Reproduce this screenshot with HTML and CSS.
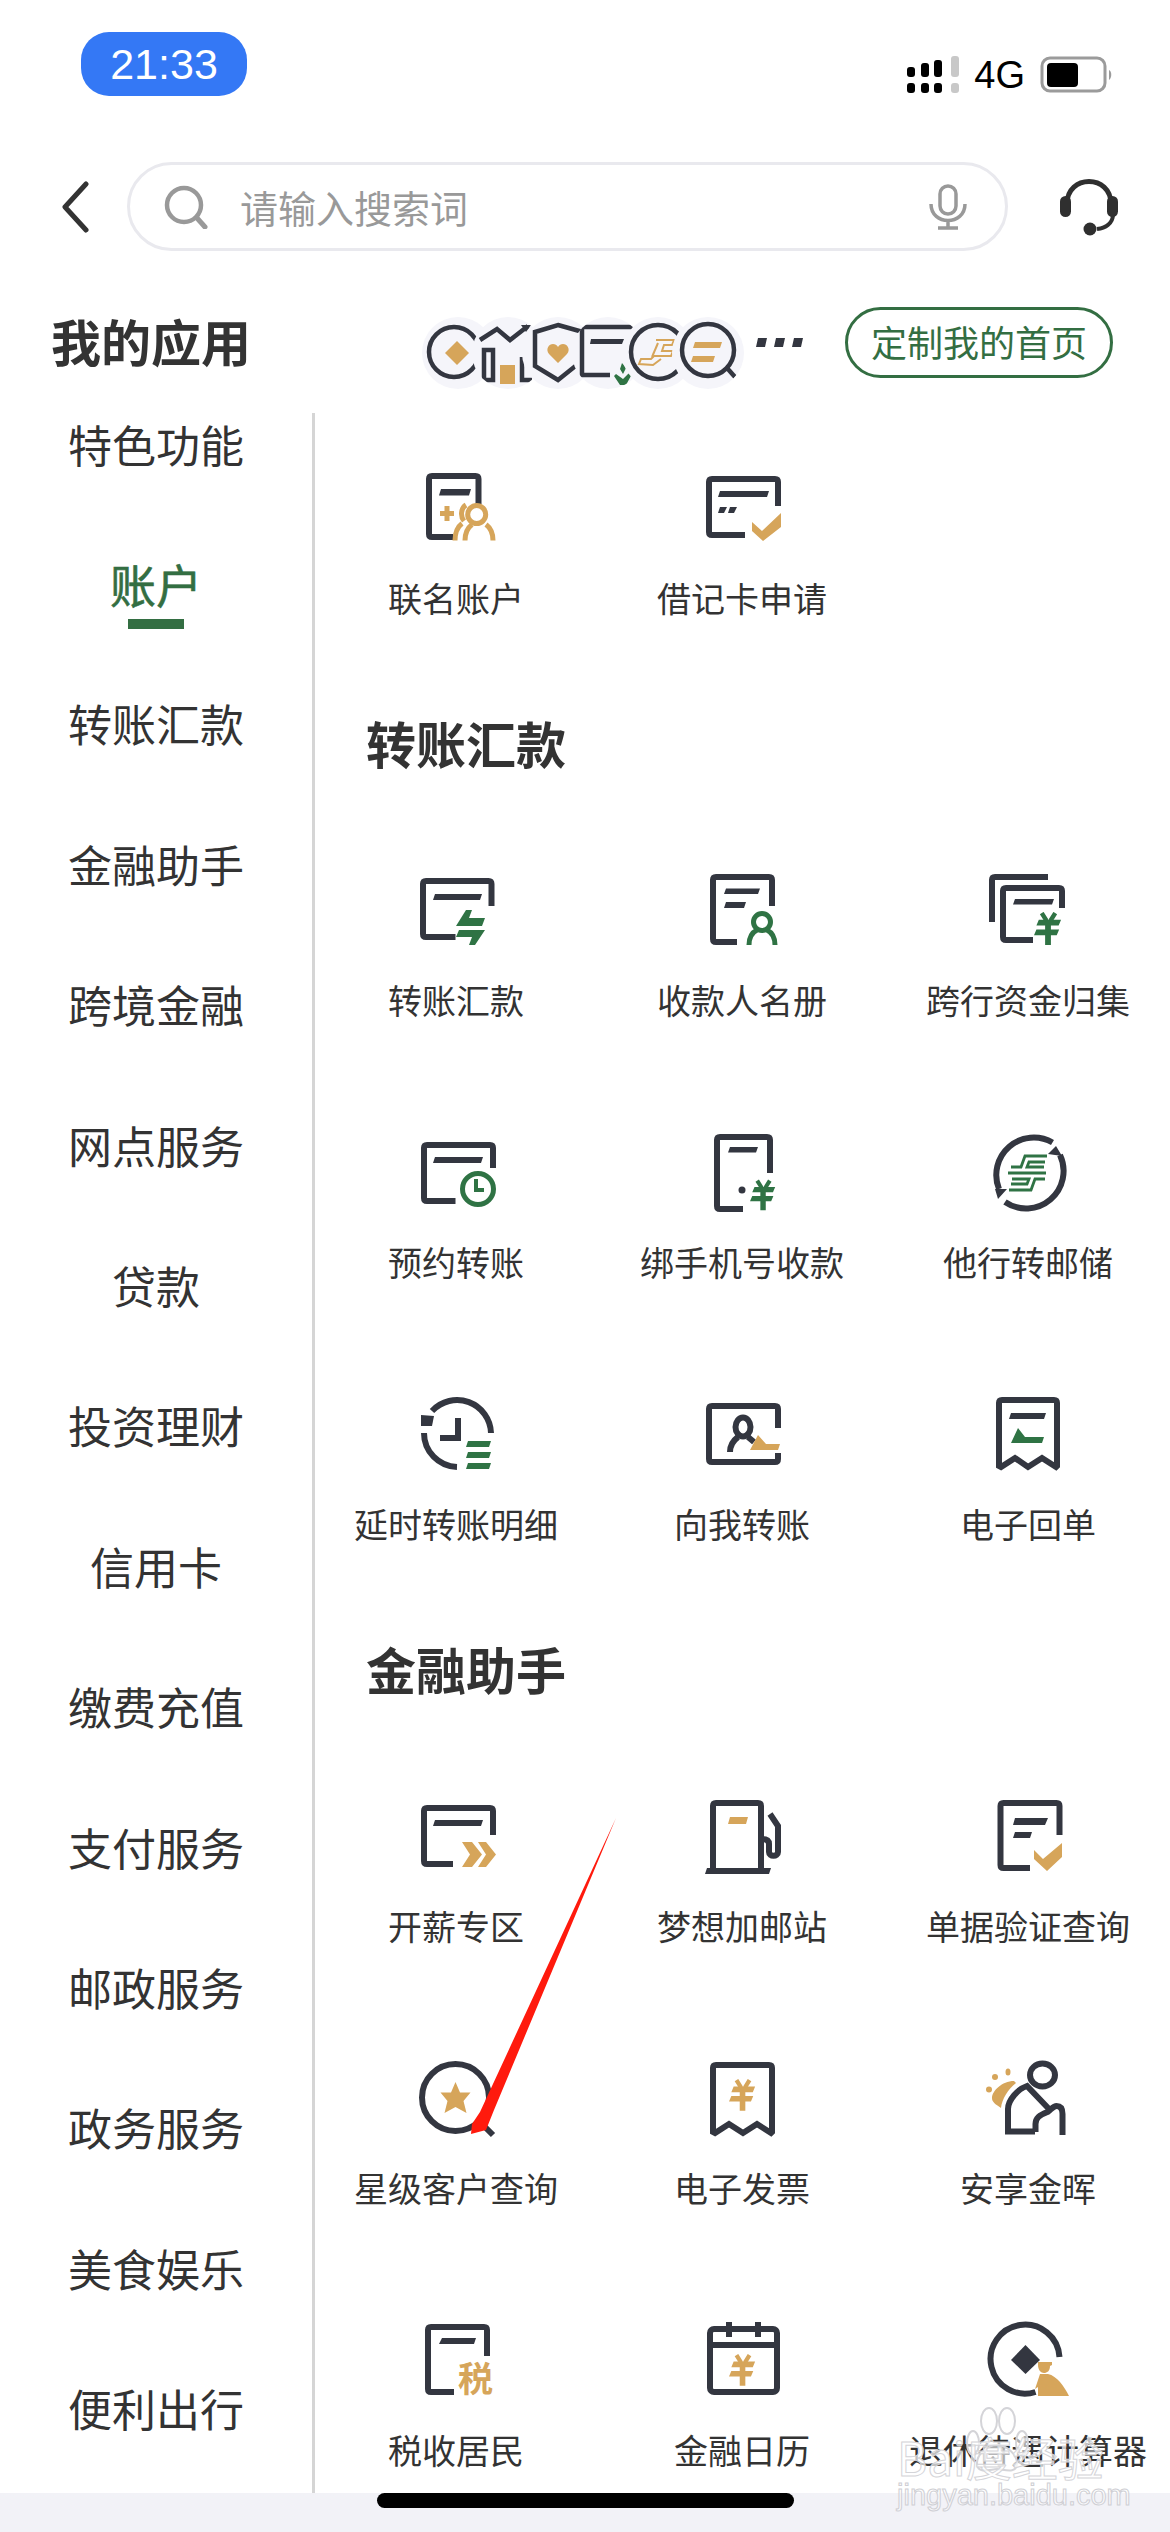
FILE: index.html
```html
<!DOCTYPE html>
<html lang="zh-CN">
<head>
<meta charset="UTF-8">
<meta name="viewport" content="width=device-width, initial-scale=1.0">
<title>我的应用</title>
<link rel="stylesheet" href="styles.css">
</head>
<body>
<svg class="defs" width="0" height="0">
    <symbol id="yen" viewBox="0 0 30 34">
        <path d="M5 8h23l-2.5 6H2.5zM2.5 18H26l-2.5 6H0zM11.5 8h6v26h-6z" fill="currentColor"/>
        <path d="M8 1l5 8M22 1l-5 8" fill="none" stroke="currentColor" stroke-width="4.5"/>
    </symbol>
</svg>

<div class="page">
    <div class="status">
        <div class="clock">21:33</div>
        <div class="status-right">
            <svg width="54" height="38" viewBox="0 0 54 38">
                <rect x="0" y="11" width="8" height="10" rx="3"/>
                <rect x="14" y="7" width="8" height="14" rx="3"/>
                <rect x="27" y="4" width="8" height="17" rx="3"/>
                <rect x="44" y="0" width="8" height="21" rx="3" fill="#c8c8c8"/>
                <rect x="0" y="27" width="8" height="10" rx="3"/>
                <rect x="14" y="27" width="8" height="10" rx="3"/>
                <rect x="27" y="27" width="8" height="10" rx="3"/>
                <rect x="44" y="27" width="8" height="10" rx="3" fill="#c8c8c8"/>
            </svg>
            <span class="net">4G</span>
            <svg width="74" height="38" viewBox="0 0 74 38">
                <rect x="2" y="2" width="63" height="33" rx="8" fill="none" stroke="#9b9b9b" stroke-width="3"/>
                <rect x="7" y="7" width="31" height="24" rx="4" fill="#000"/>
                <path d="M69 14c3 1 3 8 0 10z" fill="#9b9b9b"/>
            </svg>
        </div>
    </div>

    <div class="search-row">
        <svg width="30" height="52" viewBox="0 0 30 52">
            <path d="M26 3L5 26l21 23" fill="none" stroke="#333" stroke-width="5" stroke-linecap="round" stroke-linejoin="round"/>
        </svg>
        <div class="search-box">
            <svg width="44" height="44" viewBox="0 0 44 44">
                <circle cx="20" cy="20" r="17" fill="none" stroke="#999" stroke-width="4.5"/>
                <path d="M33 33l8 9" stroke="#999" stroke-width="5" stroke-linecap="round"/>
            </svg>
            <span class="placeholder">请输入搜索词</span>
            <svg width="38" height="46" viewBox="0 0 38 46">
                <rect x="11" y="2" width="16" height="28" rx="8" fill="none" stroke="#999" stroke-width="3.5"/>
                <path d="M2 20c0 22 34 22 34 0M19 36v8M9 44h20" fill="none" stroke="#999" stroke-width="3.5"/>
            </svg>
        </div>
        <svg class="headset" width="60" height="58" viewBox="0 0 60 58">
            <path d="M8 26C8 -4 52 -4 52 26" fill="none" stroke="#2f2f2f" stroke-width="5"/>
            <rect x="1" y="18" width="11" height="21" rx="5.5" fill="#2f2f2f"/>
            <rect x="48" y="18" width="11" height="21" rx="5.5" fill="#2f2f2f"/>
            <path d="M54 36c0 10-8 14-16 15" fill="none" stroke="#2f2f2f" stroke-width="4"/>
            <circle cx="31" cy="51" r="6.5" fill="#2f2f2f"/>
        </svg>
    </div>

    <div class="head-row">
        <h1 class="head-title">我的应用</h1>
        <div class="stack">
            <div class="stack-item">
                <svg width="72" height="72" viewBox="0 0 72 72">
                    <circle class="s-thin" cx="32" cy="35" r="25"/>
                    <path class="gold" d="M35 24l12 12-12 12-12-12z"/>
                </svg>
            </div>
            <div class="stack-item">
                <svg width="72" height="72" viewBox="0 0 72 72">
                    <path class="s-thin" d="M8 23l17-11 13 11 18-14"/>
                    <path class="ink-f" d="M49 8h10l-5 7z"/>
                    <rect class="s-thin" x="12" y="33" width="9" height="30"/>
                    <rect class="gold" x="28" y="48" width="15" height="19"/>
                    <path class="s-thin" d="M50 40v23h10"/>
                </svg>
            </div>
            <div class="stack-item">
                <svg width="72" height="72" viewBox="0 0 72 72">
                    <path class="s-thin" d="M36 8l25 7v28L36 63 13 49V15z"/>
                    <path class="gold" d="M36 46l-9-9c-4-5 0-10 4-10 2 0 4 1 5 3 1-2 3-3 5-3 4 0 8 5 4 10z"/>
                </svg>
            </div>
            <div class="stack-item">
                <svg width="72" height="72" viewBox="0 0 72 72">
                    <path class="s-thin" d="M62 10H10v48h28"/>
                    <path class="ink-f" d="M19 22h33l-2 5H18z"/>
                    <path class="green" d="M50 46l4 5-3 6-3-5zM44 57l7 5 7-7 2 2-6 11h-6l-6-9z"/>
                </svg>
            </div>
            <div class="stack-item">
                <svg width="72" height="72" viewBox="0 0 72 72">
                    <circle class="s-thin" cx="36" cy="35" r="27"/>
                    <path class="s-logo" d="M34 23h18l-2 5H42l-2 6h11l-2 5H32l-3 3H19l-2 5 14 1 8-6"/>
                    <path class="s-logo" d="M36 26l-6 14"/>
                </svg>
            </div>
            <div class="stack-item">
                <svg width="72" height="72" viewBox="0 0 72 72">
                    <circle class="s-thin" cx="36" cy="33" r="26"/>
                    <path class="s-thin" d="M55 51l8 9"/>
                    <path class="gold" d="M23 25h27l-2 6H21zM21 39h22l-2 6H19z"/>
                </svg>
            </div>
        </div>
        <svg class="more" width="48" height="10" viewBox="0 0 48 10">
            <path d="M2 0h9l-2 9H0zM20 0h9l-2 9h-9zM38 0h9l-2 9h-9z" fill="#333640"/>
        </svg>
        <div class="custom-btn">定制我的首页</div>
    </div>

    <div class="main">
        <div class="side">
            <div class="side-item">特色功能</div>
            <div class="side-item active">账户</div>
            <div class="side-item">转账汇款</div>
            <div class="side-item">金融助手</div>
            <div class="side-item">跨境金融</div>
            <div class="side-item">网点服务</div>
            <div class="side-item">贷款</div>
            <div class="side-item">投资理财</div>
            <div class="side-item">信用卡</div>
            <div class="side-item">缴费充值</div>
            <div class="side-item">支付服务</div>
            <div class="side-item">邮政服务</div>
            <div class="side-item">政务服务</div>
            <div class="side-item">美食娱乐</div>
            <div class="side-item">便利出行</div>
        </div>

        <div class="content">
            <div class="tiles">
                <div class="tile">
                    <svg viewBox="0 0 100 100">
                        <path class="s" d="M72.5 48V23q0-3-3-3H26q-3 0-3 3v55q0 3 3 3h21"/>
                        <path class="ink-f" d="M35 33h30l-2 6.5H33z"/>
                        <path class="gold" d="M38.5 50h5v5h4.5v5h-4.5v5h-5v-5H34v-5h4.5z"/>
                        <circle class="s-g" cx="70.7" cy="58.5" r="9"/>
                        <path class="s-g" d="M59 84.5c0-9 3-13 7-16M87 84.5c0-9-3-13-7-16M60 49c-5 3-6 11-2 16M49 84.5c0-9 3-14 7-17"/>
                    </svg>
                    <div class="tile-label">联名账户</div>
                </div>
                <div class="tile">
                    <svg viewBox="0 0 100 100">
                        <path class="s" d="M86 50V26q0-3-3-3H20q-3 0-3 3v50q0 3 3 3h33"/>
                        <path class="ink-f" d="M28 35h49l-2 6H26zM28 51h7l-3 6h-6zM38 51h7l-3 6h-6z"/>
                        <path class="gold" d="M60 66l10 9 19-18v14L71 85 60 75z"/>
                    </svg>
                    <div class="tile-label">借记卡申请</div>
                </div>
            </div>

            <h2 class="section-title">转账汇款</h2>
            <div class="tiles">
                <div class="tile">
                    <svg viewBox="0 0 100 100">
                        <path class="s" d="M85.5 48V26q0-3-3-3H20q-3 0-3 3v50q0 3 3 3h29.5"/>
                        <path class="ink-f" d="M29 36h47l-2 6H27z"/>
                        <path class="green-f" d="M60 52h6l-3 8h16l-3 8H50zM53 72h26L69 87h-6l3-8H50z"/>
                    </svg>
                    <div class="tile-label">转账汇款</div>
                </div>
                <div class="tile">
                    <svg viewBox="0 0 100 100">
                        <path class="s" d="M80 48V22q0-3-3-3H24q-3 0-3 3v59q0 3 3 3h21"/>
                        <path class="ink-f" d="M34 30.5h34l-2 5.5H32zM34 44h20l-2 6H32z"/>
                        <circle class="s-gr" cx="70" cy="64" r="8.5"/>
                        <path class="s-gr" d="M57 87c0-8 4-13 8-15M83 87c0-8-4-13-8-15"/>
                    </svg>
                    <div class="tile-label">收款人名册</div>
                </div>
                <div class="tile">
                    <svg viewBox="0 0 100 100">
                        <path class="s" d="M14 64V22q0-3 3-3h53"/>
                        <path class="s" d="M84 50V33q0-3-3-3H28q-3 0-3 3v46q0 3 3 3h27"/>
                        <path class="ink-f" d="M37 41h39l-2 5.5H35z"/>
                        <use class="c-green" href="#yen" x="56" y="54" width="29" height="33"/>
                    </svg>
                    <div class="tile-label">跨行资金归集</div>
                </div>
                <div class="tile">
                    <svg viewBox="0 0 100 100">
                        <path class="s" d="M87 48V28q0-3-3-3H21q-3 0-3 3v50q0 3 3 3h28.5"/>
                        <path class="ink-f" d="M29 37h48l-2 6H27z"/>
                        <circle class="halo" cx="72" cy="69" r="23"/>
                        <circle class="s-gr" cx="72" cy="69" r="15.5"/>
                        <path class="s-gr3" d="M70 59v11h8"/>
                    </svg>
                    <div class="tile-label">预约转账</div>
                </div>
                <div class="tile">
                    <svg viewBox="0 0 100 100">
                        <path class="s" d="M78 53V20q0-3-3-3H28q-3 0-3 3v66q0 3 3 3h23"/>
                        <path class="ink-f" d="M38 27h28l-2 5.5H36z"/>
                        <circle class="ink-f" cx="50" cy="70" r="3.5"/>
                        <use class="c-green" href="#yen" x="58" y="59" width="27" height="32"/>
                    </svg>
                    <div class="tile-label">绑手机号收款</div>
                </div>
                <div class="tile">
                    <svg viewBox="0 0 100 100">
                        <path class="s" d="M21 69A37.5 37.5 0 0 1 74.5 22.5M82 35A37.5 37.5 0 0 1 27 82"/>
                        <path class="ink-f" d="M78 26l6 10-14-2zM29 69l-9 10-3-10z"/>
                        <path class="s-logo2" d="M69 36H47l-4 11H33M67 42H51l-2 5H66M30 53H68M31 70H53l4-11H67M33 64H49l2-5H34"/>
                    </svg>
                    <div class="tile-label">他行转邮储</div>
                </div>
                <div class="tile">
                    <svg viewBox="0 0 100 100">
                        <path class="s" d="M85 51A34 34 0 0 0 26 29M18 51a34 34 0 0 0 33 34"/>
                        <path class="ink-f" d="M15 33l13 1-2 10-11 0z"/>
                        <path class="s" d="M52 36v20H34"/>
                        <path class="green-f" d="M62 59h23l-2 6H60zM62 70h23l-2 6H60zM62 81h23l-2 6H60z"/>
                    </svg>
                    <div class="tile-label">延时转账明细</div>
                </div>
                <div class="tile">
                    <svg viewBox="0 0 100 100">
                        <path class="s" d="M86 46V27q0-3-3-3H20q-3 0-3 3v50q0 3 3 3h63q3 0 3-3v-6"/>
                        <ellipse class="s" cx="51" cy="45" rx="7.5" ry="9.5"/>
                        <path class="s" d="M38 70c0-8 4-12 8-15M56 55l6 5"/>
                        <path class="gold" d="M66 53l8 9h14l-2 6H58z"/>
                    </svg>
                    <div class="tile-label">向我转账</div>
                </div>
                <div class="tile">
                    <svg viewBox="0 0 100 100">
                        <path class="s" d="M21 84V21q0-3 3-3h52q3 0 3 3v63l-1 1-14-9-14 9-13-9-14 9z"/>
                        <path class="ink-f" d="M33 31h35l-2 6H31z"/>
                        <path class="green-f" d="M40 46l7 9h19l-2 6H33z"/>
                    </svg>
                    <div class="tile-label">电子回单</div>
                </div>
            </div>

            <h2 class="section-title">金融助手</h2>
            <div class="tiles">
                <div class="tile">
                    <svg viewBox="0 0 100 100">
                        <path class="s" d="M87 51V27q0-3-3-3H21q-3 0-3 3v50q0 3 3 3h26"/>
                        <path class="ink-f" d="M29 36h48l-2 6H27z"/>
                        <path class="gold" d="M56 58h10l10 12.5L66 83H56l8-12.5zM72 58h8l10 12.5L80 83h-8l8-12.5z"/>
                    </svg>
                    <div class="tile-label">开薪专区</div>
                </div>
                <div class="tile">
                    <svg viewBox="0 0 100 100">
                        <path class="s" d="M21 86V22q0-3 3-3h42q3 0 3 3v64"/>
                        <path class="ink-f" d="M15 84h64l-2 6H13z"/>
                        <path class="gold" d="M38 33h18l-2 7H36z"/>
                        <path class="s" d="M78 30l8 12v26c0 5-9 5-9 0V60c0-3-2-5-7-5"/>
                    </svg>
                    <div class="tile-label">梦想加邮站</div>
                </div>
                <div class="tile">
                    <svg viewBox="0 0 100 100">
                        <path class="s" d="M81.5 51V22q0-3-3-3H25.5q-3 0-3 3v59q0 3 3 3H52"/>
                        <path class="ink-f" d="M37 34h33l-3 7H35zM37 48h17l-2 6H35z"/>
                        <path class="gold" d="M56 66l9 9 19-16v14L69 87 56 75z"/>
                    </svg>
                    <div class="tile-label">单据验证查询</div>
                </div>
                <div class="tile">
                    <svg viewBox="0 0 100 100">
                        <circle class="s" cx="49.5" cy="51.5" r="33.5"/>
                        <path class="s" d="M74 76l13 13"/>
                        <path class="gold" d="M49.5 36l4.500 10.5h10.5l-7 8.5 3 12-11-6-11 6 3-12-7-8.5H45z"/>
                    </svg>
                    <div class="tile-label">星级客户查询</div>
                </div>
                <div class="tile">
                    <svg viewBox="0 0 100 100">
                        <path class="s" d="M21 86V22q0-3 3-3h53q3 0 3 3v64l-1 1-14-9-14 9-14-9-14 9z"/>
                        <use class="c-gold" href="#yen" x="37" y="33" width="28" height="32"/>
                    </svg>
                    <div class="tile-label">电子发票</div>
                </div>
                <div class="tile">
                    <svg viewBox="0 0 100 100">
                        <ellipse class="s" cx="64.5" cy="29" rx="12.5" ry="11.5"/>
                        <path class="s" d="M57 85.5H30V63c0-9 10-20 19-23l22 23M57.5 86V78c0-6 4-9 12-12 4-3 6-6 9-6 5 0 6 4 6 8v21"/>
                        <path class="gold" d="M36 35c-12 0-22 10-22 17 0 4 3 6 9 10 1-9 7-19 15-25z"/>
                        <circle class="gold" cx="11" cy="43.5" r="3"/>
                        <circle class="gold" cx="17" cy="31" r="3"/>
                        <ellipse class="gold" cx="30" cy="26" rx="2.5" ry="3.5"/>
                    </svg>
                    <div class="tile-label">安享金晖</div>
                </div>
                <div class="tile">
                    <svg viewBox="0 0 100 100">
                        <path class="s" d="M81 48V22q0-3-3-3H25q-3 0-3 3v59q0 3 3 3h23"/>
                        <path class="ink-f" d="M36 30h34l-2 6H33z"/>
                        <text class="icon-char" x="52" y="84">税</text>
                    </svg>
                    <div class="tile-label">税收居民</div>
                </div>
                <div class="tile">
                    <svg viewBox="0 0 100 100">
                        <rect class="s" x="18" y="21" width="67" height="63" rx="4"/>
                        <path class="s" d="M37 14v15M66 14v15M18 37h67"/>
                        <use class="c-gold" href="#yen" x="37" y="46" width="28" height="32"/>
                    </svg>
                    <div class="tile-label">金融日历</div>
                </div>
                <div class="tile">
                    <svg viewBox="0 0 100 100">
                        <path class="s" d="M81.5 49A34.5 34.5 0 1 0 57.5 84"/>
                        <path class="ink-f" d="M47.5 37L62 52 47.5 66 33 52z"/>
                        <path class="gold" d="M60 54h14v3l-2 1c0 5-3 7-6 7s-6-3-6-8zM62 66h8c9 2 16 12 21 22H60v-9l-3 2z"/>
                    </svg>
                    <div class="tile-label">退休待遇计算器</div>
                </div>
            </div>
        </div>
    </div>

    <div class="home-band">
        <div class="home-bar"></div>
    </div>

    <!-- red annotation arrow drawn over the screenshot -->
    <svg class="arrow" width="170" height="330" viewBox="0 0 170 330">
        <path d="M156 8L34 300l-8 20-15 4 1-10 8-12z" fill="#ff1a0d"/>
    </svg>

    <!-- site watermark -->
    <div class="watermark">
        <svg class="paw" width="64" height="66" viewBox="0 0 64 66">
            <g fill="#fff" fill-opacity="0.6" stroke="#d4d4d8" stroke-width="2">
                <ellipse cx="8" cy="36" rx="6" ry="12"/>
                <ellipse cx="24" cy="14" rx="8" ry="13"/>
                <ellipse cx="42" cy="14" rx="8" ry="13"/>
                <ellipse cx="57" cy="36" rx="6" ry="12"/>
                <path d="M32 38c-10 0-20 10-20 18 0 12 14 6 20 6s20 6 20-6c0-8-10-18-20-18z"/>
            </g>
        </svg>
        <div class="wm-title">Bai度经验</div>
        <div class="wm-url">jingyan.baidu.com</div>
    </div>
</div>
</body>
</html>
```

FILE: styles.css
```css
* {
    box-sizing: border-box;
}
html, body {
    margin: 0;
    padding: 0;
    background-color: #fff;
}
body {
    font-family: "Noto Sans CJK SC", "Noto Sans", sans-serif;
    color: #333;
}
.defs {
    display: block;
    height: 0;
}
.page {
    position: relative;
    width: 1170px;
    height: 2532px;
    overflow: hidden;
    display: flex;
    flex-direction: column;
}

/* status bar */
.status {
    height: 162px;
    padding: 32px 56px 0 81px;
    display: flex;
    justify-content: space-between;
    align-items: flex-start;
    flex-shrink: 0;
}
.clock {
    width: 166px;
    height: 64px;
    border-radius: 28px;
    background-color: #3478f5;
    color: #fff;
    font-family: "Liberation Sans", Arial, sans-serif;
    font-size: 43px;
    line-height: 64px;
    text-align: center;
}
.status-right {
    display: flex;
    align-items: center;
    margin-top: 24px;
    color: #000;
}
.net {
    font-family: "Liberation Sans", Arial, sans-serif;
    font-size: 38px;
    line-height: 38px;
    margin: 0 15px 0 13px;
}

/* search */
.search-row {
    height: 89px;
    padding: 0 51px 0 60px;
    display: flex;
    align-items: center;
    flex-shrink: 0;
}
.search-box {
    width: 881px;
    height: 89px;
    margin-left: 37px;
    padding: 0 38px 0 34px;
    border: 3px solid #e9e9ee;
    border-radius: 45px;
    display: flex;
    align-items: center;
}
.placeholder {
    flex: 1;
    margin-left: 32px;
    font-size: 38px;
    color: #999;
}
.headset {
    margin-left: auto;
}

/* my apps row */
.head-row {
    height: 71px;
    margin-top: 56px;
    padding: 0 57px 0 51px;
    display: flex;
    align-items: center;
    flex-shrink: 0;
}
.head-title {
    width: 193px;
    margin: 0 0 6px;
    font-size: 50px;
    font-weight: 700;
    white-space: nowrap;
    color: #333;
}
.stack {
    display: flex;
    margin-top: 20px;
    margin-left: 178px;
}
.stack-item {
    width: 72px;
    height: 72px;
    border-radius: 50%;
    overflow: hidden;
    background-color: #f5f5fa;
    margin-left: -22px;
}
.stack-item:first-child {
    margin-left: 0;
}
.stack-item svg {
    display: block;
}
.more {
    margin-left: 12px;
}
.custom-btn {
    margin-left: auto;
    width: 268px;
    height: 71px;
    border: 3px solid #336e42;
    border-radius: 36px;
    color: #336e42;
    font-size: 36px;
    line-height: 63px;
    text-align: center;
}

/* side nav and content */
.main {
    display: flex;
    height: 2080px;
    margin-top: 35px;
    flex-shrink: 0;
    overflow: hidden;
}
.side {
    width: 315px;
    flex-shrink: 0;
    border-right: 3px solid #d5d5d5;
    overflow: hidden;
}
.side-item {
    position: relative;
    height: 140.4px;
    display: flex;
    align-items: center;
    justify-content: center;
    font-size: 44px;
    line-height: 50px;
    color: #333;
}
/* the list is scrolled a little, so the first row is shorter */
.side-item:first-child {
    height: 99.9px;
    padding-top: 6px;
    align-items: flex-start;
}
.side-item.active {
    color: #336e42;
    font-size: 46px;
    -webkit-text-stroke: 0.6px #336e42;
}
.side-item.active::after {
    content: "";
    position: absolute;
    left: 128px;
    top: 106px;
    width: 56px;
    height: 10px;
    background-color: #336e42;
}
.content {
    width: 855px;
    padding-top: 43px;
}
.tiles {
    margin-left: -2px;
    display: grid;
    grid-template-columns: repeat(3, 286px);
    row-gap: 95px;
}
.tile {
    display: flex;
    flex-direction: column;
    align-items: center;
}
.tile svg {
    display: block;
    width: 100px;
    height: 100px;
}
.tile-label {
    margin-top: 17px;
    font-size: 34px;
    line-height: 50px;
    color: #333;
    white-space: nowrap;
}
.section-title {
    margin: 89px 0 86px 51px;
    font-size: 50px;
    line-height: 60px;
    font-weight: 700;
    color: #333;
}

/* bottom band */
.home-band {
    flex: 1;
    padding-left: 377px;
    background-color: #f2f2f7;
}
.home-bar {
    width: 417px;
    height: 15px;
    border-radius: 8px;
    background-color: #000;
}

/* icon parts */
.s, .s-g, .s-gr, .s-gr3, .s-thin, .s-logo, .s-logo2 {
    fill: none;
}
.s {
    stroke: #333640;
    stroke-width: 6;
}
.s-thin {
    stroke: #333640;
    stroke-width: 4.5;
}
.s-g {
    stroke: #d6a55a;
    stroke-width: 5;
}
.s-gr {
    stroke: #2f7344;
    stroke-width: 5;
}
.s-gr3 {
    stroke: #2f7344;
    stroke-width: 4;
}
.s-logo {
    stroke: #d6a55a;
    stroke-width: 2;
}
.s-logo2 {
    stroke: #2f7344;
    stroke-width: 2.8;
}
.ink-f {
    fill: #333640;
}
.gold {
    fill: #d6a55a;
}
.green, .green-f {
    fill: #2f7344;
}
.halo {
    fill: #fff;
}
.c-green {
    color: #2f7344;
}
.c-gold {
    color: #d6a55a;
}
.icon-char {
    font-size: 35px;
    font-weight: 700;
    fill: #d6a55a;
}

/* overlays */
.arrow {
    position: absolute;
    left: 460px;
    top: 1810px;
}
.watermark {
    position: absolute;
    left: 897px;
    top: 2407px;
    width: 215px;
    height: 100px;
}
.paw {
    position: absolute;
    left: 68px;
    top: 0;
}
.wm-title {
    position: absolute;
    left: 0;
    top: 26px;
    font-size: 46px;
    line-height: 46px;
    white-space: nowrap;
    color: rgba(255, 255, 255, 0.7);
    -webkit-text-stroke: 1px #d4d4d8;
}
.wm-url {
    position: absolute;
    left: 0;
    top: 72px;
    font-family: "Liberation Sans", Arial, sans-serif;
    font-size: 29px;
    line-height: 32px;
    white-space: nowrap;
    color: rgba(255, 255, 255, 0.5);
    -webkit-text-stroke: 1px #cfcfd4;
}
```
